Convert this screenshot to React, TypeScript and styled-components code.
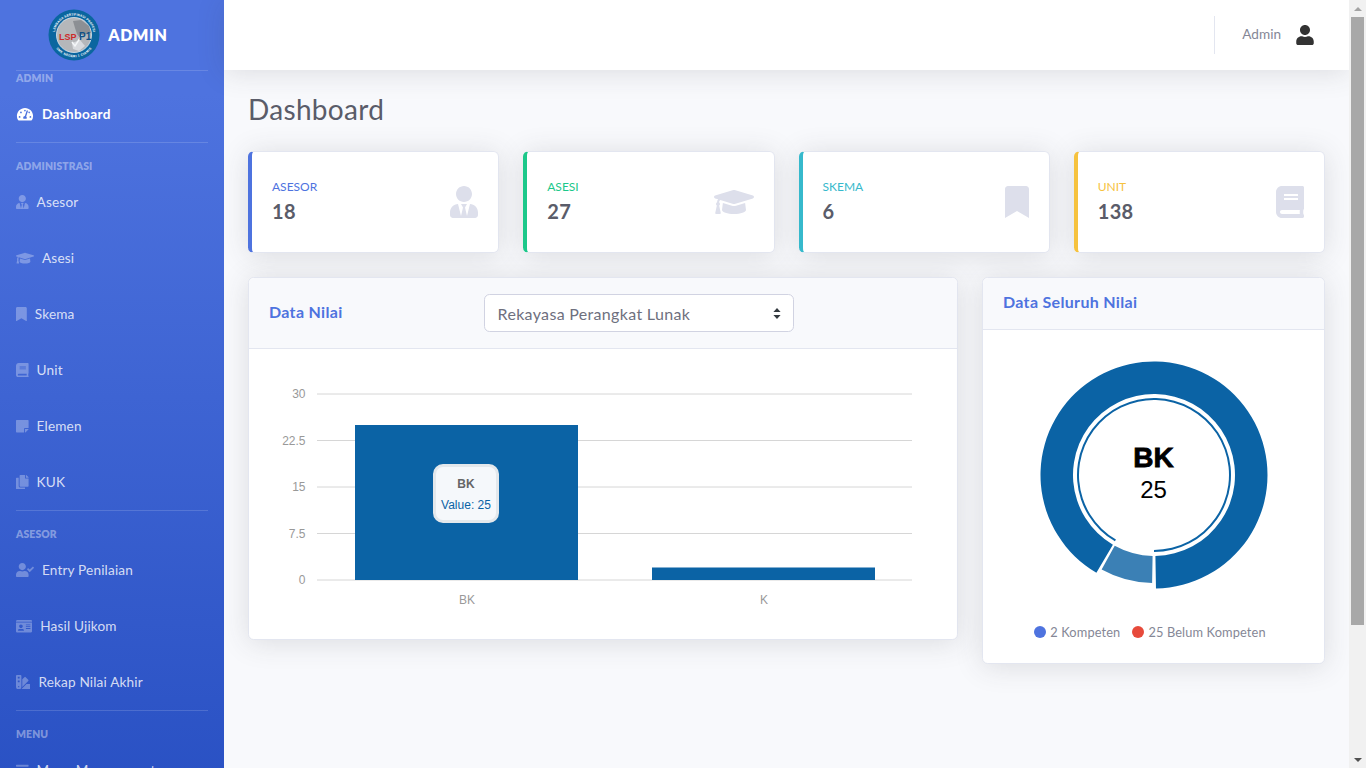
import * as React from 'react';
import styled, { createGlobalStyle } from 'styled-components';
import {
  FaBars,
  FaBook,
  FaBookmark,
  FaCopy,
  FaGraduationCap,
  FaIdCard,
  FaStickyNote,
  FaSwatchbook,
  FaTachometerAlt,
  FaUser,
  FaUserCheck,
  FaUserTie
} from 'react-icons/fa';

const FONT = `Lato, "Noto Sans", "Liberation Sans", sans-serif`;

const GlobalStyle = createGlobalStyle`
  html, body {
    margin: 0;
    height: 100%;
    overflow: hidden;
  }
  body {
    background: #f8f9fc;
    font-family: ${FONT};
    letter-spacing: 0.02em;
    color: #858796;
  }
`;

// iconRatio: width of the font awesome glyph relative to its height
const sideItems: Array<
  | { kind: 'divider'; tight?: boolean }
  | { kind: 'heading'; label: string }
  | { kind: 'link'; label: string; icon: React.ReactNode; iconRatio: number; active?: boolean }
> = [
  { kind: 'divider', tight: true },
  { kind: 'heading', label: 'ADMIN' },
  { kind: 'link', label: 'Dashboard', icon: <FaTachometerAlt />, iconRatio: 1.25, active: true },
  { kind: 'divider' },
  { kind: 'heading', label: 'ADMINISTRASI' },
  { kind: 'link', label: 'Asesor', icon: <FaUserTie />, iconRatio: 0.875 },
  { kind: 'link', label: 'Asesi', icon: <FaGraduationCap />, iconRatio: 1.25 },
  { kind: 'link', label: 'Skema', icon: <FaBookmark />, iconRatio: 0.75 },
  { kind: 'link', label: 'Unit', icon: <FaBook />, iconRatio: 0.875 },
  { kind: 'link', label: 'Elemen', icon: <FaStickyNote />, iconRatio: 0.875 },
  { kind: 'link', label: 'KUK', icon: <FaCopy />, iconRatio: 0.875 },
  { kind: 'divider' },
  { kind: 'heading', label: 'ASESOR' },
  { kind: 'link', label: 'Entry Penilaian', icon: <FaUserCheck />, iconRatio: 1.25 },
  { kind: 'link', label: 'Hasil Ujikom', icon: <FaIdCard />, iconRatio: 1.125 },
  { kind: 'link', label: 'Rekap Nilai Akhir', icon: <FaSwatchbook />, iconRatio: 1 },
  { kind: 'divider' },
  { kind: 'heading', label: 'MENU' },
  { kind: 'link', label: 'Menu Management', icon: <FaBars />, iconRatio: 0.875 }
];

const stats = [
  { label: 'ASESOR', value: '18', color: '#4e73df', icon: <FaUserTie />, iconRatio: 0.875 },
  { label: 'ASESI', value: '27', color: '#1cc88a', icon: <FaGraduationCap />, iconRatio: 1.25 },
  { label: 'SKEMA', value: '6', color: '#36b9cc', icon: <FaBookmark />, iconRatio: 0.75 },
  { label: 'UNIT', value: '138', color: '#f6c23e', icon: <FaBook />, iconRatio: 0.875 }
];

function Logo() {
  return (
    <svg width="52" height="52" viewBox="0 0 52 52">
      <defs>
        <path id="logoTop" d="M6.500 26a19.500 19.500 0 0 1 39 0" />
        <path id="logoBottom" d="M3.800 26a22.200 22.200 0 0 0 44.400 0" />
      </defs>
      <circle cx="26" cy="26" r="25.500" fill="#0a669f" />
      <circle cx="26" cy="26" r="17.500" fill="#b5b7ba" stroke="#dfe8ef" strokeWidth="0.8" />
      <path d="M25 12l8-1 8 6 2 7-7 1-3 5-4-5-2-6z" fill="#8c8f94" />
      <path d="M24 34l8-3 5 6-6 5-6-2z" fill="#d8dade" />
      <path d="M24 33l3 4 7-11" fill="none" stroke="#f4f6f8" strokeWidth="1.5" />
      <text x="11" y="30.500" fontSize="9" fontWeight="700" fontFamily="Liberation Sans" fill="#cc2a2a" letterSpacing="0">
        LSP
      </text>
      <text x="31" y="30.500" fontSize="10" fontWeight="700" fontFamily="Liberation Sans" fill="#0f4f86" letterSpacing="0">
        P1
      </text>
      <text fontSize="3.200" fontWeight="700" fontFamily="Liberation Sans" fill="#fff" letterSpacing="0.1">
        <textPath href="#logoTop" startOffset="50%" textAnchor="middle">
          LEMBAGA SERTIFIKASI PROFESI
        </textPath>
      </text>
      <text fontSize="3.200" fontWeight="700" fontFamily="Liberation Sans" fill="#fff" letterSpacing="0.3">
        <textPath href="#logoBottom" startOffset="50%" textAnchor="middle">
          SMK NEGERI 1 CIAMIS
        </textPath>
      </text>
    </svg>
  );
}

function BarChart() {
  const ticks = ['30', '22.5', '15', '7.5', '0'];
  return (
    <svg width="664" height="250" viewBox="0 0 664 250">
      {ticks.map((t, i) => (
        <g key={t}>
          <line x1="68" x2="663" y1={25 + i * 46.5} y2={25 + i * 46.5} stroke="#d6d6d6" strokeWidth="1" />
          <text x="56.500" y={29 + i * 46.5} textAnchor="end" fontSize="12" fontFamily="Liberation Sans" fill="#999">
            {t}
          </text>
        </g>
      ))}
      <rect x="106" y="56" width="223" height="155" fill="#0b63a5" />
      <rect x="403" y="198.500" width="223" height="12.500" fill="#0b63a5" />
      <text x="218" y="235" textAnchor="middle" fontSize="12" fontFamily="Liberation Sans" fill="#999">
        BK
      </text>
      <text x="515" y="235" textAnchor="middle" fontSize="12" fontFamily="Liberation Sans" fill="#999">
        K
      </text>
    </svg>
  );
}

function polar(cx: number, cy: number, r: number, deg: number) {
  const a = ((deg - 90) * Math.PI) / 180;
  return `${cx + r * Math.cos(a)} ${cy + r * Math.sin(a)}`;
}

function arc(cx: number, cy: number, r0: number, r1: number, from: number, to: number) {
  const large = to - from > 180 ? 1 : 0;
  return `M${polar(cx, cy, r1, from)}A${r1} ${r1} 0 ${large} 1 ${polar(cx, cy, r1, to)}L${polar(cx, cy, r0, to)}A${r0} ${r0} 0 ${large} 0 ${polar(cx, cy, r0, from)}Z`;
}

function Donut() {
  const c = 114;
  return (
    <svg width="228" height="228" viewBox="0 0 228 228">
      {/* hovered slice: bigger radius plus the thin inner ring */}
      <path d={arc(c, c, 81, 113.5, 210.5, 539)} fill="#0b63a5" />
      <path d={arc(c, c, 75, 77, 210.5, 540)} fill="#0b63a5" />
      <path d={arc(c, c, 81, 108, 181, 209)} fill="#3b80b5" />
    </svg>
  );
}

export default function App() {
  return (
    <>
      <GlobalStyle />
      <Shell>
        <Page>
          <Sidebar>
            <Brand>
              <Logo />
              <BrandText>ADMIN</BrandText>
            </Brand>
            {sideItems.map((item, i) => {
              if (item.kind === 'divider') return <SideDivider key={i} $tight={item.tight} />;
              if (item.kind === 'heading') return <SideHeading key={i}>{item.label}</SideHeading>;
              return (
                <SideLink key={i} $active={item.active} $iconRatio={item.iconRatio}>
                  {item.icon}
                  <span>{item.label}</span>
                </SideLink>
              );
            })}
          </Sidebar>
          <Main>
            <Topbar>
              <TopDivider />
              <TopUser>Admin</TopUser>
              <TopAvatar>
                <FaUser />
              </TopAvatar>
            </Topbar>
            <Content>
              <PageTitle>Dashboard</PageTitle>
              <StatGrid>
                {stats.map((s) => (
                  <StatCard key={s.label} $color={s.color}>
                    <StatText>
                      <StatLabel $color={s.color}>{s.label}</StatLabel>
                      <StatValue>{s.value}</StatValue>
                    </StatText>
                    <StatIcon $ratio={s.iconRatio}>{s.icon}</StatIcon>
                  </StatCard>
                ))}
              </StatGrid>
              <ChartRow>
                <NilaiCard>
                  <NilaiHeader>
                    <CardTitle>Data Nilai</CardTitle>
                    <FakeSelect>
                      Rekayasa Perangkat Lunak
                      <SelectCaret>
                        <svg width="8" height="11" viewBox="0 0 8 11">
                          <path d="M4 0l3.600 4H.4zM4 11L.4 7h7.200z" fill="#343a40" />
                        </svg>
                      </SelectCaret>
                    </FakeSelect>
                  </NilaiHeader>
                  <BarBody>
                    <BarChart />
                    <ChartTooltip>
                      <TooltipTitle>BK</TooltipTitle>
                      <TooltipValue>Value: 25</TooltipValue>
                    </ChartTooltip>
                  </BarBody>
                </NilaiCard>
                <TotalCard>
                  <TotalHeader>
                    <CardTitle>Data Seluruh Nilai</CardTitle>
                  </TotalHeader>
                  <DonutBody>
                    <Donut />
                    <DonutCenter>
                      <DonutTitle>BK</DonutTitle>
                      <DonutValue>25</DonutValue>
                    </DonutCenter>
                  </DonutBody>
                  <Legend>
                    <LegendItem>
                      <LegendDot $color="#4e73df" />2 Kompeten
                    </LegendItem>
                    <LegendItem>
                      <LegendDot $color="#e74a3b" />25 Belum Kompeten
                    </LegendItem>
                  </Legend>
                </TotalCard>
              </ChartRow>
            </Content>
          </Main>
        </Page>
        <Scrollbar>
          <ScrollArrow $dir="up" />
          <ScrollTrack>
            <ScrollThumb />
          </ScrollTrack>
          <ScrollArrow $dir="down" />
        </Scrollbar>
      </Shell>
    </>
  );
}

const Shell = styled.div`
  display: flex;
  height: 100vh;
  overflow: hidden;
`;

const Page = styled.div`
  flex: 1;
  min-width: 0;
  display: flex;
  align-items: stretch;
  min-height: 927px;
`;

const Scrollbar = styled.div`
  width: 17px;
  flex: none;
  display: flex;
  flex-direction: column;
  background: #f1f1f1;
`;

const ScrollArrow = styled.div<{ $dir: 'up' | 'down' }>`
  height: 17px;
  flex: none;
  display: flex;
  align-items: center;
  justify-content: center;
  &::before {
    content: '';
    border-left: 4px solid transparent;
    border-right: 4px solid transparent;
    ${(p) => (p.$dir === 'up' ? 'border-bottom: 4px solid #a3a3a3;' : 'border-top: 4px solid #505050;')}
  }
`;

const ScrollTrack = styled.div`
  flex: 1;
  padding: 0 2px;
`;

const ScrollThumb = styled.div`
  height: 608px;
  background: #a8a8a8;
`;

const Sidebar = styled.aside`
  width: 224px;
  height: 927px;
  flex: none;
  display: flex;
  flex-direction: column;
  padding: 0 16px;
  box-sizing: border-box;
  background: linear-gradient(180deg, #4e73df 10%, #224abe 100%);
`;

const Brand = styled.div`
  height: 70px;
  flex: none;
  display: flex;
  align-items: center;
  justify-content: center;
  gap: 8px;
  margin-right: 8px;
`;

const BrandText = styled.div`
  font-weight: 800;
  font-size: 16px;
  letter-spacing: 0.6px;
  color: #fff;
  margin-top: -2px;
`;

const SideDivider = styled.hr<{ $tight?: boolean }>`
  width: 100%;
  flex: none;
  margin: ${(p) => (p.$tight ? '0' : '0 0 16px')};
  border: 0;
  border-top: 1px solid rgba(255, 255, 255, 0.15);
`;

const SideHeading = styled.div`
  height: 15px;
  flex: none;
  font-size: 10.400px;
  line-height: 15px;
  font-weight: 800;
  letter-spacing: 0.01em;
  color: rgba(255, 255, 255, 0.4);
`;

const SideLink = styled.a<{ $active?: boolean; $iconRatio: number }>`
  height: 56px;
  flex: none;
  display: flex;
  align-items: center;
  gap: 8px;
  font-size: 13.600px;
  letter-spacing: ${(p) => (p.$active ? '0.025em' : '0.012em')};
  color: ${(p) => (p.$active ? '#fff' : 'rgba(255, 255, 255, 0.8)')};
  font-weight: ${(p) => (p.$active ? 700 : 400)};
  svg {
    flex: none;
    width: ${(p) => 14.4 * p.$iconRatio}px;
    height: 14.400px;
    color: ${(p) => (p.$active ? '#fff' : 'rgba(255, 255, 255, 0.3)')};
  }
`;

const Main = styled.main`
  flex: 1;
  min-width: 0;
  display: flex;
  flex-direction: column;
`;

const Topbar = styled.header`
  height: 70px;
  flex: none;
  display: flex;
  align-items: center;
  background: #fff;
  box-shadow: 0 2.400px 28px rgba(58, 59, 69, 0.15);
  padding-right: 34px;
`;

const TopDivider = styled.div`
  width: 1px;
  height: 38.500px;
  margin-left: auto;
  margin-right: 27px;
  background: #e3e6f0;
`;

const TopUser = styled.span`
  font-size: 13.600px;
  letter-spacing: 0;
  color: #858796;
  margin: 0 14px 2px 0;
`;

const TopAvatar = styled.span`
  display: flex;
  font-size: 20px;
  color: #333;
`;

const Content = styled.div`
  padding: 0 24px;
`;

const PageTitle = styled.h1`
  margin: 23px 0 24px;
  font-size: 28px;
  line-height: 33.600px;
  font-weight: 400;
  color: #5a5c69;
`;

const StatGrid = styled.div`
  display: grid;
  grid-template-columns: repeat(4, 1fr);
  gap: 24px;
`;

const Card = styled.section`
  background: #fff;
  border: 1px solid #e3e6f0;
  border-radius: 5.600px;
  box-shadow: 0 2.400px 28px rgba(58, 59, 69, 0.15);
  box-sizing: border-box;
`;

const StatCard = styled(Card)<{ $color: string }>`
  height: 102px;
  display: flex;
  align-items: center;
  justify-content: space-between;
  padding: 0 20px;
  border-left: 4px solid ${(p) => p.$color};
`;

const StatText = styled.div`
  padding-bottom: 1px;
`;

const StatLabel = styled.div<{ $color: string }>`
  font-size: 12px;
  line-height: 14px;
  letter-spacing: 0;
  color: ${(p) => p.$color};
  margin-bottom: 5px;
`;

const StatValue = styled.div`
  font-size: 20px;
  line-height: 24px;
  font-weight: 700;
  color: #5a5c69;
`;

const StatIcon = styled.div<{ $ratio: number }>`
  display: flex;
  color: #dddfeb;
  svg {
    width: ${(p) => 32 * p.$ratio}px;
    height: 32px;
  }
`;

const ChartRow = styled.div`
  display: flex;
  align-items: flex-start;
  gap: 24px;
  margin-top: 24px;
`;

const NilaiCard = styled(Card)`
  width: 710px;
  flex: none;
`;

const TotalCard = styled(Card)`
  flex: 1;
  min-width: 0;
`;

const CardHeader = styled.div`
  display: flex;
  align-items: center;
  padding: 0 20px;
  background: #f8f9fc;
  border-bottom: 1px solid #e3e6f0;
  border-radius: 5.600px 5.600px 0 0;
`;

const NilaiHeader = styled(CardHeader)`
  height: 70px;
`;

const TotalHeader = styled(CardHeader)`
  height: 49px;
  padding-bottom: 2px;
`;

const CardTitle = styled.h6`
  margin: -2px 0 0;
  font-size: 16px;
  font-weight: 700;
  color: #4e73df;
  white-space: nowrap;
`;

const FakeSelect = styled.div`
  position: relative;
  width: 310px;
  height: 38px;
  margin: 1px 0 0 141px;
  padding: 0 13px;
  box-sizing: border-box;
  display: flex;
  align-items: center;
  font-size: 16px;
  background: #fff;
  border: 1px solid #d1d3e2;
  border-radius: 5.600px;
  color: #6e707e;
`;

const SelectCaret = styled.span`
  position: absolute;
  right: 12px;
  top: 13px;
  display: flex;
`;

const BarBody = styled.div`
  position: relative;
  height: 290px;
  padding: 20px 0 0;
  box-sizing: border-box;
  letter-spacing: 0;
`;

const ChartTooltip = styled.div`
  position: absolute;
  left: 184px;
  top: 115px;
  width: 66px;
  height: 59px;
  box-sizing: border-box;
  display: flex;
  flex-direction: column;
  align-items: center;
  padding-top: 10px;
  background: #f5f8fb;
  border: 3px solid #e3e8ec;
  border-radius: 10px;
  font-family: 'Liberation Sans', sans-serif;
  font-size: 12px;
`;

const TooltipTitle = styled.div`
  font-weight: 700;
  color: #666;
  line-height: 14px;
`;

const TooltipValue = styled.div`
  color: #0b63a5;
  line-height: 14px;
  margin-top: 7px;
  white-space: nowrap;
`;

const DonutBody = styled.div`
  position: relative;
  display: flex;
  justify-content: center;
  padding-top: 31px;
`;

const DonutCenter = styled.div`
  position: absolute;
  left: 0;
  right: 0;
  top: 112px;
  text-align: center;
  font-family: 'Liberation Sans', sans-serif;
  letter-spacing: 0;
  color: #000;
`;

const DonutTitle = styled.div`
  font-size: 28px;
  line-height: 32px;
  font-weight: 700;
  -webkit-text-stroke: 0.8px #000;
`;

const DonutValue = styled.div`
  font-size: 24px;
  line-height: 28px;
  margin-top: 2px;
`;

const Legend = styled.div`
  display: flex;
  justify-content: center;
  gap: 12px;
  margin-top: 35px;
  padding-right: 7px;
  height: 39px;
  font-size: 12.800px;
  letter-spacing: 0.01em;
  color: #858796;
`;

const LegendItem = styled.span`
  display: flex;
  align-items: center;
  gap: 4px;
  height: 16px;
`;

const LegendDot = styled.i<{ $color: string }>`
  width: 12px;
  height: 12px;
  border-radius: 50%;
  background: ${(p) => p.$color};
`;
